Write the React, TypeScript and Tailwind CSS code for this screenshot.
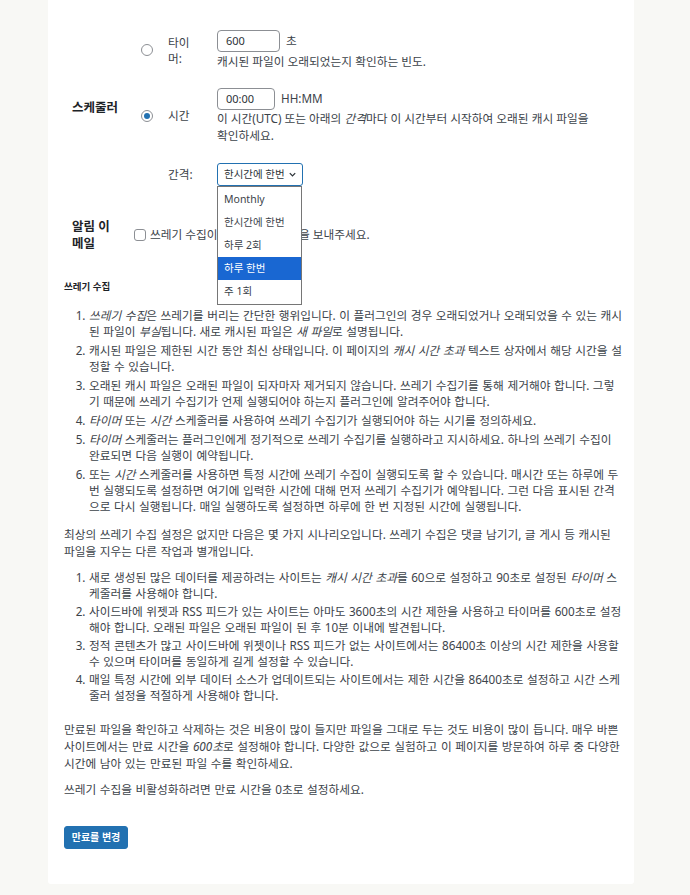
import React from "react";

const font = "font-['Noto_Sans','Noto_Sans_CJK_KR',sans-serif]";

const Radio = ({ checked }: { checked?: boolean }) => (
  <span className="ml-[7px] flex h-[12px] w-[12px] items-center justify-center rounded-full border border-[#8c8f94] bg-white">
    {checked && <span className="h-[6px] w-[6px] rounded-full bg-[#2271b1]" />}
  </span>
);

const intervals = ["Monthly", "한시간에 한번", "하루 2회", "하루 한번", "주 1회"];

const Interval = () => (
  <div className="relative w-[86px]">
    <div className="flex h-[23px] items-center justify-between whitespace-nowrap rounded-[3px] border border-[#2271b1] pl-[6px] pr-[5px] text-[10.5px] text-[#2c3338]">
      <span>한시간에 한번</span>
      <svg width="9" height="9" viewBox="0 0 10 10" fill="none">
        <path d="M2 3.5 5 6.5 8 3.5" stroke="#2c3338" strokeWidth="1.4" />
      </svg>
    </div>
    <ul className="absolute left-0 top-[23px] z-10 w-[85px] border border-[#767676] bg-white py-[1px] text-[10.5px] text-[#3c434a]">
      {intervals.map((item) => (
        <li
          key={item}
          className={
            item === "하루 한번"
              ? "flex h-[23px] items-center whitespace-nowrap bg-[#1967d2] px-[6px] text-white"
              : "flex h-[23px] items-center whitespace-nowrap px-[6px]"
          }
        >
          {item}
        </li>
      ))}
    </ul>
  </div>
);

const body = "text-[11.7px] [word-spacing:0.5px]";

const App = () => {
  return (
    <div className={`min-h-screen bg-[#f8f8f5] ${font} text-[#3c434a]`}>
      <div className="ml-[48px] w-[586px] rounded-b-[3px] bg-white pb-[35px] pl-4 pr-[10px] pt-[30px]">
        {/* scheduler settings */}
        <div className="flex items-center">
          <div className="w-[70px] pl-2 text-[12.5px] font-bold text-[#1d2327]">
            스케줄러
          </div>
          <div className="grid grid-cols-[34px_49px_1fr] items-center gap-y-[19px] text-[11.7px]">
            <Radio />
            <span className="leading-[16px]">
              타이
              <br />
              머:
            </span>
            <div>
              <div className="flex items-center">
                <div className="flex h-[22px] w-[63px] items-center rounded-[4px] border border-[#8c8f94] pl-[8px] text-[11px] text-[#2c3338]">
                  600
                </div>
                <span className="ml-[6px]">초</span>
              </div>
              <p className="mt-[1px] leading-[16px]">
                캐시된 파일이 오래되었는지 확인하는 빈도.
              </p>
            </div>

            <Radio checked />
            <span>시간</span>
            <div>
              <div className="flex items-center">
                <div className="flex h-[22px] w-[58px] items-center rounded-[4px] border border-[#8c8f94] pl-[8px] text-[11px] text-[#2c3338]">
                  00:00
                </div>
                <span className="ml-[6px]">HH:MM</span>
              </div>
              <p className="leading-[17px]">
                이 시간(UTC) 또는 아래의 <em>간격</em>마다 이 시간부터 시작하여
                오래된 캐시 파일을
                <br />
                확인하세요.
              </p>
            </div>

            <span />
            <span>간격:</span>
            <Interval />
          </div>
        </div>

        {/* email notice */}
        <div className="mt-[32px] flex items-center">
          <div className="w-[70px] pl-2 text-[12.5px] font-bold leading-[17px] text-[#1d2327]">
            알림 이
            <br />
            메일
          </div>
          <label className="flex items-center text-[11.7px]">
            <span className="h-[12px] w-[12px] rounded-[3px] border border-[#8c8f94] bg-white" />
            <span className="ml-[4px]">
              쓰레기 수집이 완료되면 이메일을 보내주세요.
            </span>
          </label>
        </div>

        <h4 className="mt-[28px] text-[9.5px] font-bold leading-[14px] text-[#1d2327]">
          쓰레기 수집
        </h4>

        <ol className={`mt-[13px] list-decimal pl-[25px] leading-[16px] ${body} [&>li]:mb-[3px]`}>
          <li>
            <em>쓰레기 수집</em>은 쓰레기를 버리는 간단한 행위입니다. 이
            플러그인의 경우 오래되었거나 오래되었을 수 있는 캐시된 파일이{" "}
            <em>부실</em>됩니다. 새로 캐시된 파일은 <em>새 파일</em>로
            설명됩니다.
          </li>
          <li>
            캐시된 파일은 제한된 시간 동안 최신 상태입니다. 이 페이지의{" "}
            <em>캐시 시간 초과</em> 텍스트 상자에서 해당 시간을 설정할 수
            있습니다.
          </li>
          <li>
            오래된 캐시 파일은 오래된 파일이 되자마자 제거되지 않습니다. 쓰레기
            수집기를 통해 제거해야 합니다. 그렇기 때문에 쓰레기 수집기가 언제
            실행되어야 하는지 플러그인에 알려주어야 합니다.
          </li>
          <li>
            <em>타이머</em> 또는 <em>시간</em> 스케줄러를 사용하여 쓰레기
            수집기가 실행되어야 하는 시기를 정의하세요.
          </li>
          <li>
            <em>타이머</em> 스케줄러는 플러그인에게 정기적으로 쓰레기 수집기를
            실행하라고 지시하세요. 하나의 쓰레기 수집이 완료되면 다음 실행이
            예약됩니다.
          </li>
          <li>
            또는 <em>시간</em> 스케줄러를 사용하면 특정 시간에 쓰레기 수집이
            실행되도록 할 수 있습니다. 매시간 또는 하루에 두 번 실행되도록
            설정하면 여기에 입력한 시간에 대해 먼저 쓰레기 수집기가 예약됩니다.
            그런 다음 표시된 간격으로 다시 실행됩니다. 매일 실행하도록 설정하면
            하루에 한 번 지정된 시간에 실행됩니다.
          </li>
        </ol>

        <p className={`mt-[12px] leading-[17px] ${body}`}>
          최상의 쓰레기 수집 설정은 없지만 다음은 몇 가지 시나리오입니다.
          쓰레기 수집은 댓글 남기기, 글 게시 등 캐시된 파일을 지우는 다른
          작업과 별개입니다.
        </p>

        <ol className={`mt-[9px] list-decimal pl-[25px] leading-[16px] ${body} [&>li]:mb-[2px]`}>
          <li>
            새로 생성된 많은 데이터를 제공하려는 사이트는{" "}
            <em>캐시 시간 초과</em>를 60으로 설정하고 90초로 설정된{" "}
            <em>타이머</em> 스케줄러를 사용해야 합니다.
          </li>
          <li>
            사이드바에 위젯과 RSS 피드가 있는 사이트는 아마도 3600초의 시간
            제한을 사용하고 타이머를 600초로 설정해야 합니다. 오래된 파일은
            오래된 파일이 된 후 10분 이내에 발견됩니다.
          </li>
          <li>
            정적 콘텐츠가 많고 사이드바에 위젯이나 RSS 피드가 없는 사이트에서는
            86400초 이상의 시간 제한을 사용할 수 있으며 타이머를 동일하게 길게
            설정할 수 있습니다.
          </li>
          <li>
            매일 특정 시간에 외부 데이터 소스가 업데이트되는 사이트에서는 제한
            시간을 86400초로 설정하고 시간 스케줄러 설정을 적절하게 사용해야
            합니다.
          </li>
        </ol>

        <p className={`mt-[18px] leading-[17px] ${body}`}>
          만료된 파일을 확인하고 삭제하는 것은 비용이 많이 들지만 파일을
          그대로 두는 것도 비용이 많이 듭니다. 매우 바쁜 사이트에서는 만료
          시간을 <em>600초</em>로 설정해야 합니다. 다양한 값으로 실험하고 이
          페이지를 방문하여 하루 중 다양한 시간에 남아 있는 만료된 파일 수를
          확인하세요.
        </p>

        <p className={`mt-[9px] leading-[17px] ${body}`}>
          쓰레기 수집을 비활성화하려면 만료 시간을 0초로 설정하세요.
        </p>

        <button className="mt-[28px] h-[23px] w-[64px] rounded-[3px] border border-[#2271b1] bg-[#2271b1] text-[10px] font-bold text-white">
          만료를 변경
        </button>
      </div>
    </div>
  );
};

export default App;
